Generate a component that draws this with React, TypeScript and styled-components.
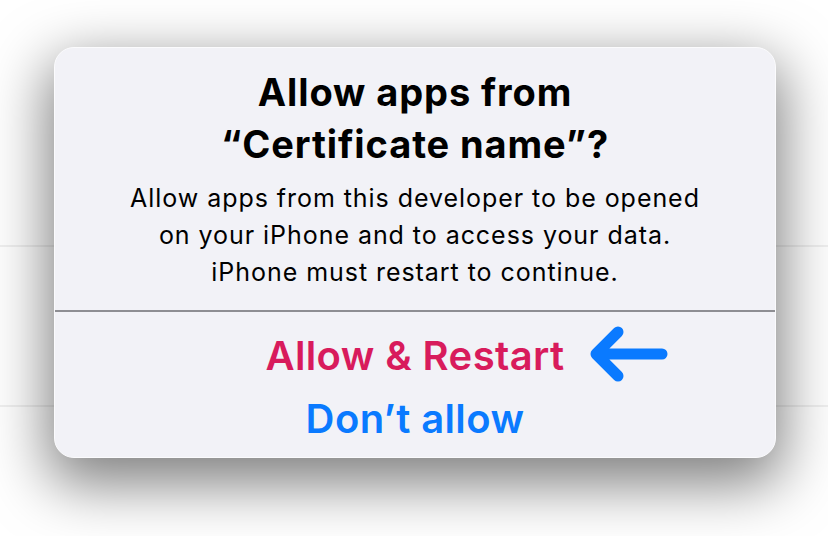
import React from "react";
import styled, { createGlobalStyle } from "styled-components";

const GlobalStyle = createGlobalStyle`
  html, body {
    margin: 0;
    padding: 0;
    width: 828px;
    height: 536px;
    overflow: hidden;
    background-color: #ffffff;
    background-image:
      linear-gradient(to bottom, transparent 245px, rgba(0, 0, 0, 0.06) 245px, rgba(0, 0, 0, 0.06) 247px, transparent 247px),
      linear-gradient(to bottom, transparent 405px, rgba(0, 0, 0, 0.06) 405px, rgba(0, 0, 0, 0.06) 407px, transparent 407px);
    font-family: Inter, "Noto Sans", sans-serif;
  }
`;

const Page = styled.div`
  width: 828px;
  height: 536px;
  display: flex;
  justify-content: center;
  padding-top: 47px;
  padding-left: 2px;
  box-sizing: border-box;
`;

const Alert = styled.div`
  width: 722px;
  height: 411px;
  box-sizing: border-box;
  background-color: #f2f2f7;
  border-radius: 20px;
  border: 1px solid #fbfbfd;
  box-shadow: 0 20px 58px 6px rgba(0, 0, 0, 0.5);
  display: flex;
  flex-direction: column;
  overflow: hidden;
`;

const Content = styled.div`
  padding: 18px 16px 0;
  display: flex;
  flex-direction: column;
  align-items: center;
  text-align: center;
`;

const Title = styled.h1`
  margin: 0;
  font-size: 38px;
  line-height: 52px;
  font-weight: 700;
  color: #000000;
  letter-spacing: 0.9px;
`;

const Message = styled.p`
  margin: 9.5px 0 0;
  font-size: 25px;
  line-height: 37px;
  font-weight: 400;
  color: #000000;
  letter-spacing: 0.95px;
`;

const Divider = styled.div`
  height: 2px;
  background-color: #8e8e93;
  margin-top: 19.5px;
`;

const Actions = styled.div`
  display: flex;
  flex-direction: column;
  align-items: center;
  padding-top: 12px;
`;

const ActionButton = styled.button<{ $tone: "danger" | "default" }>`
  position: relative;
  border: none;
  background: none;
  padding: 0;
  margin: 0;
  font-family: Inter, "Noto Sans", sans-serif;
  font-size: 40px;
  line-height: 63px;
  font-weight: 600;
  letter-spacing: 0.4px;
  color: ${(p) => (p.$tone === "danger" ? "#d81b5c" : "#0a7aff")};
  cursor: pointer;
`;

const Pointer = styled.svg`
  position: absolute;
  left: calc(100% + 23px);
  top: calc(50% - 2px);
  transform: translateY(-50%);
`;

const ArrowLeft: React.FC = () => (
  <Pointer width="82" height="66" viewBox="0 0 82 66" fill="none">
    <path
      d="M8 33 H74 M30 11 L8 33 L30 55"
      stroke="#0a7aff"
      strokeWidth="11"
      strokeLinecap="round"
      strokeLinejoin="round"
    />
  </Pointer>
);

const App: React.FC = () => {
  return (
    <>
      <GlobalStyle />
      <Page>
        <Alert>
          <Content>
            <Title>
              Allow apps from
              <br />
              “Certificate name”?
            </Title>
            <Message>
              Allow apps from this developer to be opened
              <br />
              on your iPhone and to access your data.
              <br />
              iPhone must restart to continue.
            </Message>
          </Content>
          <Divider />
          <Actions>
            <ActionButton $tone="danger">
              Allow &amp; Restart
              <ArrowLeft />
            </ActionButton>
            <ActionButton $tone="default">Don’t allow</ActionButton>
          </Actions>
        </Alert>
      </Page>
    </>
  );
};

export default App;
